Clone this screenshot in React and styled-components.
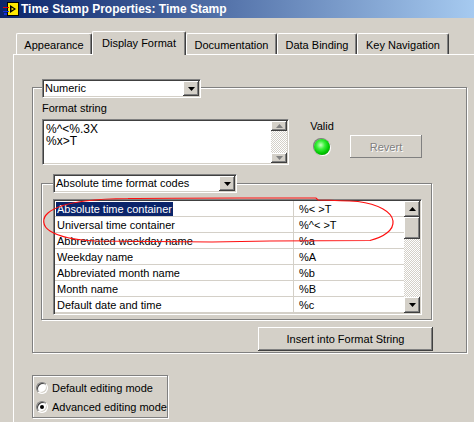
import React from 'react';
import styled, { createGlobalStyle, css } from 'styled-components';

const GlobalStyle = createGlobalStyle`
  html, body { margin: 0; padding: 0; background: #D4D0C8; }
  body { font-family: "Liberation Sans", Arial, sans-serif; font-size: 11px; color: #000; }
  * { box-sizing: border-box; }
`;

const Win = styled.div`
  position: relative;
  width: 474px;
  height: 422px;
  overflow: hidden;
  background: #D4D0C8;
`;

const TitleBar = styled.div`
  height: 18px;
  display: flex;
  align-items: center;
  gap: 2px;
  padding-left: 3px;
  background: linear-gradient(to right, #0A246A, #A6CAF0);
`;

const TitleText = styled.span`
  color: #fff;
  font-weight: bold;
  font-size: 12px;
  line-height: 18px;
  white-space: nowrap;
`;

const TabStrip = styled.div`
  display: flex;
  align-items: flex-end;
  height: 23px;
  margin-top: 13px;
  padding-left: 16px;
`;

const Tab = styled.div`
  width: ${p => p.$w}px;
  height: 21px;
  display: flex;
  align-items: center;
  justify-content: center;
  white-space: nowrap;
  border-top: 1px solid #fff;
  border-left: 1px solid #fff;
  border-right: 1px solid #404040;
  box-shadow: inset -1px 0 #808080;
  border-top-left-radius: 2px;
  border-top-right-radius: 2px;
  background: #D4D0C8;
  padding-top: 1px;
  ${p => p.$active && css`
    height: 24px;
    margin-bottom: -1px;
    position: relative;
    z-index: 1;
    padding-top: 0;
    padding-bottom: 2px;
  `}
`;

const Panel = styled.div`
  margin-left: 13px;
  height: 368px;
  border-top: 1px solid #fff;
  border-left: 1px solid #fff;
  display: flex;
  flex-direction: column;
  align-items: flex-start;
`;

const GroupBox = styled.div`
  width: ${p => p.$w}px;
  height: ${p => p.$h}px;
  margin: ${p => p.$m};
  border: 1px solid #808080;
  box-shadow: inset 1px 1px #fff, 1px 1px 0 #fff;
  display: flex;
  flex-direction: column;
  align-items: flex-start;
  flex-shrink: 0;
`;

const SelectBox = styled.div`
  width: ${p => p.$w}px;
  height: 19px;
  margin: ${p => p.$m};
  background: #fff;
  border: 1px solid;
  border-color: #808080 #fff #fff #808080;
  box-shadow: inset 1px 1px #404040, inset -1px -1px #D4D0C8;
  padding: 1px;
  display: flex;
  align-items: stretch;
  flex-shrink: 0;
`;

const SelectText = styled.span`
  flex: 1;
  padding-left: 1px;
  line-height: 15px;
  white-space: nowrap;
`;

const raised = css`
  background: #D4D0C8;
  box-shadow: inset -1px -1px #404040, inset 1px 1px #fff, inset -2px -2px #808080, inset 2px 2px #D4D0C8;
`;

const ArrowButton = styled.div`
  ${raised}
  width: ${p => p.$w || 16}px;
  height: ${p => p.$h || 15}px;
  display: flex;
  align-items: center;
  justify-content: center;
  flex-shrink: 0;
`;

const FormatRow = styled.div`
  display: flex;
  align-items: flex-start;
  margin: 4px 0 0 9px;
`;

const Column = styled.div`
  display: flex;
  flex-direction: column;
  align-items: ${p => p.$center ? 'center' : 'flex-start'};
  width: ${p => p.$w ? `${p.$w}px` : 'auto'};
  margin: ${p => p.$m || '0'};
`;

const Label = styled.div`
  line-height: 13px;
  white-space: nowrap;
  margin: ${p => p.$m || '0'};
`;

const TextArea = styled.div`
  width: 247px;
  height: 46px;
  margin-top: 4px;
  background: #fff;
  border: 1px solid;
  border-color: #808080 #fff #fff #808080;
  box-shadow: inset 1px 1px #404040, inset -1px -1px #D4D0C8;
  padding: 1px;
  display: flex;
`;

const TextLines = styled.div`
  flex: 1;
  padding: 2px 0 0 2px;
  font-size: 12px;
  line-height: 12px;
  white-space: pre;
`;

const ScrollBar = styled.div`
  width: 16px;
  display: flex;
  flex-direction: column;
  flex-shrink: 0;
`;

const Track = styled.div`
  flex: 1;
  background: repeating-conic-gradient(#fff 0 25%, #D4D0C8 0 50%) 0 0 / 2px 2px;
`;

const Thumb = styled.div`
  ${raised}
  height: 22px;
`;

const Led = styled.div`
  width: 16px;
  height: 16px;
  margin-top: 6px;
  border-radius: 50%;
  background: radial-gradient(circle at 42% 38%, #C8FFC0 0, #3CF03C 30%, #00C800 60%, #007A00 100%);
  box-shadow: -1px -1px 0 0 #808080, 1px 1px 0 0 #fff, 0 0 0 1px #B8B4AC;
`;

const Button = styled.div`
  ${raised}
  width: ${p => p.$w}px;
  height: ${p => p.$h}px;
  margin: ${p => p.$m};
  display: flex;
  align-items: center;
  justify-content: center;
  white-space: nowrap;
  flex-shrink: 0;
  ${p => p.$disabled && css`
    color: #808080;
    text-shadow: 1px 1px #fff;
    box-shadow: inset -1px -1px #808080, inset 1px 1px #fff;
  `}
`;

const ListBox = styled.div`
  width: 369px;
  height: 116px;
  margin: 6px 0 0 11px;
  background: #fff;
  border: 1px solid;
  border-color: #808080 #fff #fff #808080;
  box-shadow: inset 1px 1px #404040, inset -1px -1px #D4D0C8;
  padding: 1px;
  display: flex;
`;

const Rows = styled.div`
  flex: 1;
  display: flex;
  flex-direction: column;
`;

const Row = styled.div`
  display: grid;
  grid-template-columns: 239px 110px;
  height: 16px;
  border-bottom: 1px solid #D4D0C8;
`;

const Cell = styled.div`
  display: flex;
  align-items: center;
  padding-left: ${p => p.$pad}px;
  white-space: nowrap;
  overflow: hidden;
  border-right: ${p => p.$divider ? '1px solid #D4D0C8' : 'none'};
`;

const CellText = styled.span`
  display: block;
  height: 14px;
  line-height: 14px;
  padding: 0 1px;
  ${p => p.$selected && css`
    background: #0A246A;
    color: #fff;
  `}
`;

const RadioBox = styled.div`
  width: 136px;
  height: 43px;
  margin: 22px 0 0 18px;
  border: 1px solid #808080;
  box-shadow: inset 1px 1px #fff, 1px 1px 0 #fff;
  padding: 2px 0 0 3px;
  display: flex;
  flex-direction: column;
`;

const RadioRow = styled.div`
  height: 20px;
  display: flex;
  align-items: center;
  gap: 4px;
  white-space: nowrap;
`;

const RadioCircle = styled.div`
  width: 12px;
  height: 12px;
  border-radius: 50%;
  background: #fff;
  border: 1px solid;
  border-color: #808080 #fff #fff #808080;
  box-shadow: inset 1px 1px #404040, inset -1px -1px #D4D0C8;
  display: flex;
  align-items: center;
  justify-content: center;
  flex-shrink: 0;
  &::after {
    content: '';
    width: 4px;
    height: 4px;
    border-radius: 50%;
    background: ${p => p.$checked ? '#000' : 'transparent'};
  }
`;

const Overlay = styled.svg`
  position: absolute;
  left: 0;
  top: 0;
  pointer-events: none;
`;

const Arrow = ({ up, color = '#000' }) => (
  <svg width="7" height="4" viewBox="0 0 7 4">
    <polygon points={up ? '3.5,0 7,4 0,4' : '0,0 7,0 3.5,4'} fill={color} />
  </svg>
);

const AppIcon = () => (
  <svg width="16" height="16" viewBox="0 0 16 16">
    <rect x="4.5" y="1.5" width="11" height="13" fill="#FFE800" stroke="#000" />
    <polygon points="7,4 13,8 7,12" fill="#000" />
    <polygon points="8.5,6.5 11,8 8.5,9.5" fill="#FFE800" />
    <line x1="0" y1="6.5" x2="6" y2="6.5" stroke="#E00000" strokeWidth="1" />
    <line x1="0" y1="10.5" x2="6" y2="10.5" stroke="#1030E0" strokeWidth="1" />
    <rect x="1" y="12" width="3" height="2" fill="#1030E0" />
  </svg>
);

const Tabs = [
  ['Appearance', 76],
  ['Display Format', 94],
  ['Documentation', 91],
  ['Data Binding', 80],
  ['Key Navigation', 92],
];

const Codes = [
  ['Absolute time container', '%< >T'],
  ['Universal time container', '%^< >T'],
  ['Abbreviated weekday name', '%a'],
  ['Weekday name', '%A'],
  ['Abbreviated month name', '%b'],
  ['Month name', '%B'],
  ['Default date and time', '%c'],
];

export default function App() {
  return (
    <Win>
      <GlobalStyle />
      <TitleBar>
        <AppIcon />
        <TitleText>Time Stamp Properties: Time Stamp</TitleText>
      </TitleBar>
      <TabStrip>
        {Tabs.map(([t, w]) => (
          <Tab key={t} $w={w} $active={t === 'Display Format'}>{t}</Tab>
        ))}
      </TabStrip>
      <Panel>
        <GroupBox $w={435} $h={266} $m="32px 0 0 18px">
          <SelectBox $w={159} $m="-9px 0 0 9px">
            <SelectText>Numeric</SelectText>
            <ArrowButton><Arrow /></ArrowButton>
          </SelectBox>
          <FormatRow>
            <Column>
              <Label>Format string</Label>
              <TextArea>
                <TextLines>{'%^<%.3X\n%x>T'}</TextLines>
                <ScrollBar>
                  <ArrowButton $h={10}><Arrow up color="#808080" /></ArrowButton>
                  <Track />
                  <ArrowButton $h={10}><Arrow color="#808080" /></ArrowButton>
                </ScrollBar>
              </TextArea>
            </Column>
            <Column $center $w={30} $m="0 0 0 18px">
              <Label $m="18px 0 0 0">Valid</Label>
              <Led />
            </Column>
            <Button $disabled $w={72} $h={23} $m="33px 0 0 13px">Revert</Button>
          </FormatRow>
          <GroupBox $w={391} $h={137} $m="18px 0 0 8px">
            <SelectBox $w={184} $m="-10px 0 0 11px">
              <SelectText>Absolute time format codes</SelectText>
              <ArrowButton><Arrow /></ArrowButton>
            </SelectBox>
            <ListBox>
              <Rows>
                {Codes.map(([name, code], i) => (
                  <Row key={name}>
                    <Cell $pad={1} $divider>
                      <CellText $selected={i === 0}>{name}</CellText>
                    </Cell>
                    <Cell $pad={4}>
                      <CellText>{code}</CellText>
                    </Cell>
                  </Row>
                ))}
              </Rows>
              <ScrollBar>
                <ArrowButton $h={16}><Arrow up /></ArrowButton>
                <Thumb />
                <Track />
                <ArrowButton $h={16}><Arrow /></ArrowButton>
              </ScrollBar>
            </ListBox>
          </GroupBox>
          <Button $w={175} $h={24} $m="7px 0 0 225px">Insert into Format String</Button>
        </GroupBox>
        <RadioBox>
          <RadioRow><RadioCircle />Default editing mode</RadioRow>
          <RadioRow><RadioCircle $checked />Advanced editing mode</RadioRow>
        </RadioBox>
      </Panel>
      <Overlay width="474" height="422" viewBox="0 0 474 422">
        <path
          d="M 128 198.5 C 160 198, 200 198, 240 198 L 316 198 L 318 200 C 335 200.5, 348 201, 358 201.5 C 378 204, 392 212, 393 221 C 394 230, 384 237, 370 240.5 L 270 241 L 212 242 L 95 241 C 75 240, 58 236, 50 231 C 42 226, 42 218, 48 213 C 55 207, 70 203, 85 201 C 100 199, 115 198.5, 128 198.5"
          fill="none"
          stroke="#FF1010"
          strokeWidth="1.2"
        />
      </Overlay>
    </Win>
  );
}
